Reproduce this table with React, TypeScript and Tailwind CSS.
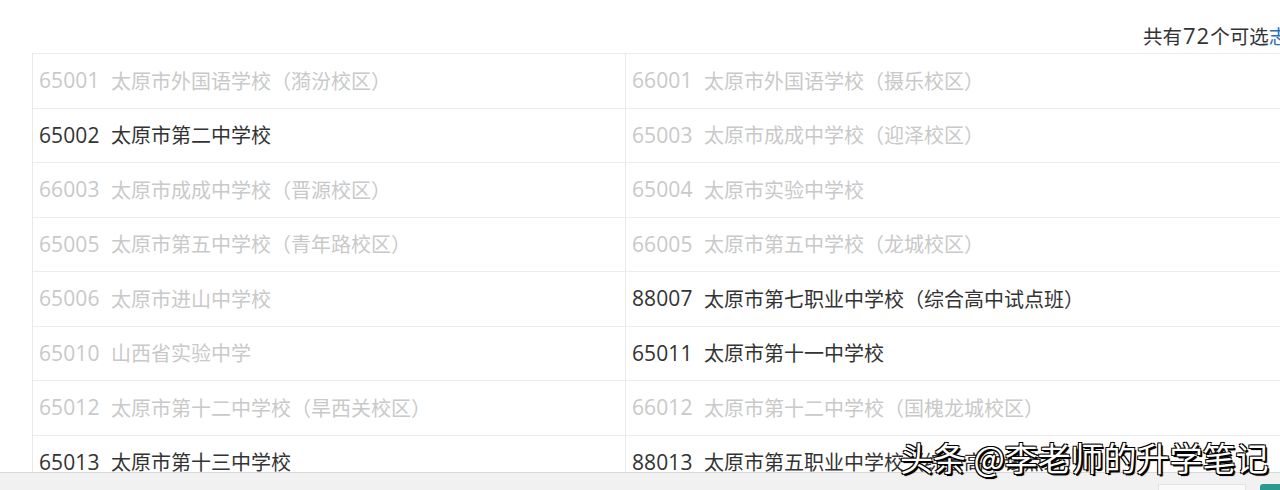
import React from 'react';

type School = { code: string; name: string; on: boolean };

const rows: [School, School][] = [
  [
    { code: '65001', name: '太原市外国语学校（漪汾校区）', on: false },
    { code: '66001', name: '太原市外国语学校（摄乐校区）', on: false },
  ],
  [
    { code: '65002', name: '太原市第二中学校', on: true },
    { code: '65003', name: '太原市成成中学校（迎泽校区）', on: false },
  ],
  [
    { code: '66003', name: '太原市成成中学校（晋源校区）', on: false },
    { code: '65004', name: '太原市实验中学校', on: false },
  ],
  [
    { code: '65005', name: '太原市第五中学校（青年路校区）', on: false },
    { code: '66005', name: '太原市第五中学校（龙城校区）', on: false },
  ],
  [
    { code: '65006', name: '太原市进山中学校', on: false },
    { code: '88007', name: '太原市第七职业中学校（综合高中试点班）', on: true },
  ],
  [
    { code: '65010', name: '山西省实验中学', on: false },
    { code: '65011', name: '太原市第十一中学校', on: true },
  ],
  [
    { code: '65012', name: '太原市第十二中学校（旱西关校区）', on: false },
    { code: '66012', name: '太原市第十二中学校（国槐龙城校区）', on: false },
  ],
  [
    { code: '65013', name: '太原市第十三中学校', on: true },
    { code: '88013', name: '太原市第五职业中学校（综合高中试点班）', on: true },
  ],
];

function Cell({ s, first }: { s: School; first?: boolean }) {
  return (
    <div
      className={
        'flex items-center h-full whitespace-nowrap text-[20px] ' +
        (first ? 'w-[592px] pl-[6px] ' : 'flex-1 pl-[6px] border-l border-[#e9e9e9] ') +
        (s.on ? 'text-[#333333]' : 'text-[#c9c9c9]')
      }
    >
      <span className="w-[72px] shrink-0 text-[21px] font-['Open_Sans',sans-serif] tracking-[0.1px]">{s.code}</span>
      <span className="font-['Noto_Sans_CJK_SC',sans-serif]">{s.name}</span>
    </div>
  );
}

export default function App() {
  return (
    <div className="relative h-[490px] w-[1280px] overflow-hidden bg-white flex flex-col font-['Noto_Sans_CJK_SC',sans-serif]">
      <div className="h-[53px] shrink-0 flex items-center pt-[16px] overflow-hidden">
        <div className="ml-[1143px] whitespace-nowrap text-[19.5px] leading-none text-[#333333]">
          共有<span className="font-['Open_Sans',sans-serif] text-[22px] tracking-[1px] ml-[1px]">72</span>个可选
          <span className="text-[#2d6fb8]">志愿</span>
        </div>
      </div>

      <div className="flex-1 overflow-hidden">
        <div className="ml-[32px] w-[1300px] border-t border-l border-[#e9e9e9]">
          {rows.map(([l, r], i) => (
            <div key={i} className="flex h-[54.5px] border-b border-[#ececec]">
              <Cell s={l} first />
              <Cell s={r} />
            </div>
          ))}
        </div>
      </div>

      <div className="h-[18px] shrink-0 bg-[#f1f1f1] border-t border-[#d9d9d9] flex items-end justify-end">
        <div className="w-[88px] h-[6px] bg-[#fafafa] border border-b-0 border-[#e3e3e3] mr-[14px]" />
        <div className="w-[20px] h-[6px] bg-[#2a9a8e] rounded-tl-[3px]" />
      </div>

      <div className="absolute left-[900px] top-[441px] whitespace-nowrap text-[33px] leading-none text-white font-['Noto_Sans_CJK_SC',sans-serif] [text-shadow:1.5px_1.5px_0_#000,-1px_-1px_0_#000,1px_-1px_0_#000,-1px_1px_0_#000,2px_2px_1px_#000]">
        头条 @李老师的升学笔记
      </div>
    </div>
  );
}
